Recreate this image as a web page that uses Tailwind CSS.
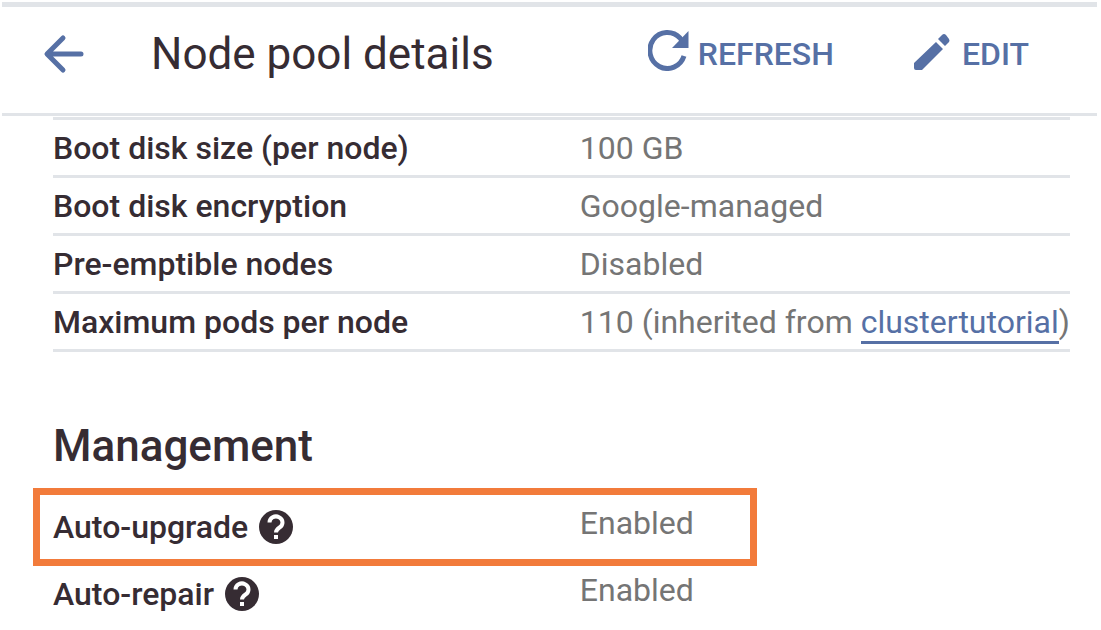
<!DOCTYPE html>
<html lang="en">
<head>
<meta charset="utf-8">
<meta name="viewport" content="width=device-width, initial-scale=1">
<title>Node pool details</title>
<script src="https://cdn.jsdelivr.net/npm/@tailwindcss/browser@4"></script>
</head>
<body class="bg-white font-[Roboto,sans-serif] text-[#362c33]">
<div class="pt-[2px]">
  <header class="mr-[4px] ml-[2px] flex h-[114px] items-center border-t-[5px] border-b-[3px] border-[#e1e4e8] pr-[68px] pb-3 pl-10">
    <button type="button" aria-label="Back" class="flex text-[#5670a5]">
      <svg class="h-10 w-11" viewBox="0 0 44 40" fill="none" stroke="currentColor" stroke-width="5" stroke-linecap="round" stroke-linejoin="round"><path d="M21 4 5 20l16 16M6 20h33"/></svg>
    </button>
    <h1 class="ml-[65px] text-[44px] leading-[52px]">Node pool details</h1>
    <div class="ml-auto flex items-center gap-[78px] text-[32px] leading-10 font-medium text-[#5670a5]">
      <button type="button" class="flex items-center gap-2">
        <svg class="mb-2 h-[42px] w-[42px]" viewBox="0 0 42 42"><path d="M36 27A17.500 18 0 1 1 32 9l3 4" fill="none" stroke="currentColor" stroke-width="5"/><path d="M40.500 2v17H24z" fill="currentColor"/></svg>
        REFRESH
      </button>
      <button type="button" class="flex items-center gap-3">
        <svg class="mb-1 h-[38px] w-[38px]" viewBox="0 0 38 38" fill="currentColor"><path d="M2 30 24 9l7 7L10 37H4q-2 0-2-2zM26 6l4-4q2-2 4 0l3 4q1 2 0 3l-4 4z"/></svg>
        EDIT
      </button>
    </div>
  </header>
  <main class="mr-[31px] ml-[53px]">
    <table class="mt-px w-full table-fixed border-collapse text-left text-[32px] leading-10">
      <tbody>
        <tr class="h-[58px] border-y-[3px] border-[#e1e4e8]"><th scope="row" class="w-[51.8%] p-0 font-medium">Boot disk size (per node)</th><td class="p-0 whitespace-nowrap text-[#757575]">100 GB</td></tr>
        <tr class="h-[58px] border-y-[3px] border-[#e1e4e8]"><th scope="row" class="p-0 font-medium">Boot disk encryption</th><td class="p-0 whitespace-nowrap text-[#757575]">Google-managed</td></tr>
        <tr class="h-[58px] border-y-[3px] border-[#e1e4e8]"><th scope="row" class="p-0 font-medium">Pre-emptible nodes</th><td class="p-0 whitespace-nowrap text-[#757575]">Disabled</td></tr>
        <tr class="h-[58px] border-y-[3px] border-[#e1e4e8]"><th scope="row" class="p-0 font-medium">Maximum pods per node</th><td class="p-0 whitespace-nowrap text-[#757575]">110 (inherited from <a href="#clustertutorial" class="border-b-[3px] border-[#5670a5] text-[#5670a5]">clustertutorial</a>)</td></tr>
      </tbody>
    </table>
    <h2 class="mt-[68px] text-[44px] leading-[52px] font-medium">Management</h2>
    <dl class="mt-[16px] text-[32px] leading-10">
      <div class="relative flex h-[78px] items-center">
        <dt class="flex w-[51.8%] items-center gap-[10px] font-medium">Auto-upgrade
          <button type="button" aria-label="About auto-upgrade"><svg class="h-9 w-9" viewBox="0 0 36 36"><circle cx="18" cy="18" r="17" fill="currentColor"/><path d="M11.500 13.500a6.500 6 0 1 1 10 5c-2.500 1.700-3.500 2.500-3.500 5" fill="none" stroke="#fff" stroke-width="4"/><path d="M16 26h4v4h-4z" fill="#fff"/></svg></button>
        </dt>
        <dd class="pb-2 text-[#757575]">Enabled</dd>
        <div class="pointer-events-none absolute inset-y-0 right-[30.8%] -left-5 border-[7px] border-[#f27b3b]"></div>
      </div>
      <div class="flex h-14 items-center">
        <dt class="flex w-[51.8%] items-center gap-[10px] font-medium">Auto-repair
          <button type="button" aria-label="About auto-repair"><svg class="h-9 w-9" viewBox="0 0 36 36"><circle cx="18" cy="18" r="17" fill="currentColor"/><path d="M11.500 13.500a6.500 6 0 1 1 10 5c-2.500 1.700-3.500 2.500-3.500 5" fill="none" stroke="#fff" stroke-width="4"/><path d="M16 26h4v4h-4z" fill="#fff"/></svg></button>
        </dt>
        <dd class="pb-2 text-[#757575]">Enabled</dd>
      </div>
    </dl>
  </main>
</div>
</body>
</html>
